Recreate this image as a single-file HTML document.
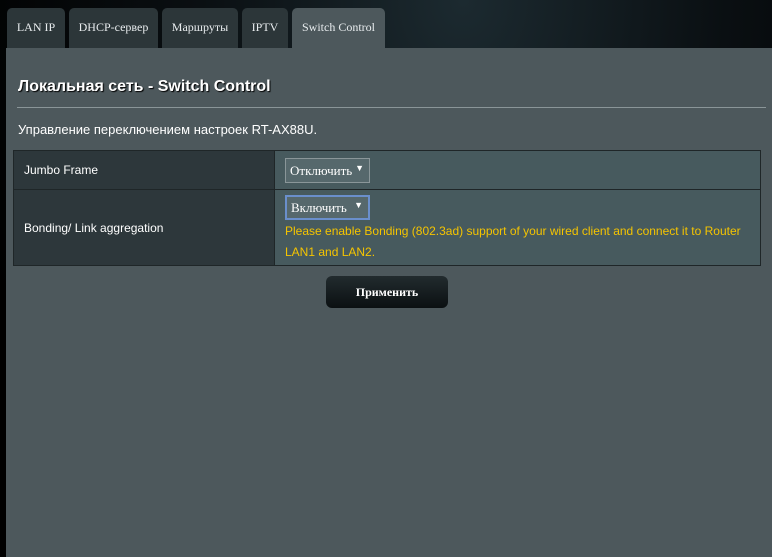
<!DOCTYPE html>
<html><head><style>
body{margin:0;width:772px;height:557px;background:radial-gradient(ellipse at 60% 0%,#1c2a30 0%,#0a0f12 40%,#000 80%);position:relative;overflow:hidden;font-family:"Liberation Sans",sans-serif;}
.tab{position:absolute;top:8px;height:40px;background:#2c3639;border-radius:5px 5px 0 0;color:#e8ecee;font-family:"Liberation Serif",serif;font-size:12px;line-height:38px;text-align:center;}
.tab.act{background:#4d585c;}
.panel{position:absolute;left:6px;top:48px;right:0;bottom:0;background:#4d585c;}
h1{position:absolute;left:12px;top:30px;margin:0;font-size:16px;color:#fff;font-weight:bold;text-shadow:1px 1px 1px #000;}
.hr{position:absolute;left:11px;right:6px;top:59px;height:1px;background:#8a9598;}
.desc{position:absolute;left:12px;top:74px;color:#fff;font-size:13px;}
table{position:absolute;left:7px;top:102px;width:748px;border-collapse:collapse;font-size:12px;color:#fff;}
td{border:1px solid #1f2628;}
td.l{background:#2d373b;width:249px;padding-left:10px;}
td.r{background:#475a5e;padding-left:10px;}
.sel{display:block;border:1px solid #8a9699;background:#56686c;color:#fff;font-family:"Liberation Serif",serif;font-size:13px;height:25px;line-height:23px;padding-left:4px;position:relative;box-sizing:border-box;}
.sel span{position:absolute;right:5px;top:-2px;font-size:9px;}
.btn{position:absolute;left:320px;top:228px;width:122px;height:32px;border-radius:6px;background:linear-gradient(#222b2e,#0b1012);color:#fff;font-family:"Liberation Serif",serif;font-weight:bold;font-size:12px;text-align:center;line-height:32px;}
</style></head><body>
<div class="tab" style="left:7px;width:58px">LAN IP</div>
<div class="tab" style="left:69px;width:89px">DHCP-сервер</div>
<div class="tab" style="left:162px;width:76px">Маршруты</div>
<div class="tab" style="left:242px;width:46px">IPTV</div>
<div class="tab act" style="left:292px;width:93px">Switch Control</div>
<div class="panel">
<h1>Локальная сеть - Switch Control</h1>
<div class="hr"></div>
<div class="desc">Управление переключением настроек RT-AX88U.</div>
<table>
<tr style="height:39px"><td class="l">Jumbo Frame</td><td class="r"><div class="sel" style="width:85px;margin-top:1px">Отключить<span>▼</span></div></td></tr>
<tr style="height:76px"><td class="l">Bonding/ Link aggregation</td><td class="r"><div class="sel" style="width:85px;border:2px solid #6a8fcc;margin-top:2px;line-height:21px">Включить<span>▼</span></div><div style="color:#f5c400;line-height:21px;margin-top:1px">Please enable Bonding (802.3ad) support of your wired client and connect it to Router LAN1 and LAN2.</div></td></tr>
</table>
<div class="btn">Применить</div>
</div>
</body></html>
